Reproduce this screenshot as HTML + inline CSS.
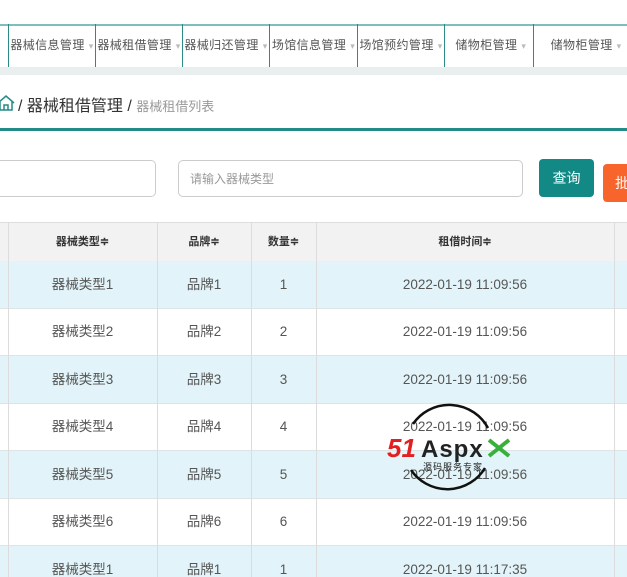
<!DOCTYPE html>
<html><head><meta charset="utf-8">
<style>
*{margin:0;padding:0;box-sizing:border-box}
html,body{width:627px;height:577px;overflow:hidden}
body{background:#fff;position:relative;font-family:"Liberation Sans","Noto Sans CJK SC",sans-serif}
.a{position:absolute}
.nav{top:24px;left:0;width:627px;height:43px;border-top:2px solid #7fbfbb;background:#fff}
.band{top:67px;left:0;width:627px;height:8px;background:#e8efee}
.sep{top:24px;width:1px;height:43px;background:#2e8a86}
.ni{top:24px;height:43px;line-height:43px;font-size:12px;color:#555;text-align:center;letter-spacing:0.4px;white-space:nowrap}
.ni i{font-style:normal;color:#bbb;font-size:9px;margin-left:4px}
.bc{top:93px;left:0;font-size:16px;color:#333;white-space:nowrap}
.bc span{font-size:13px;color:#999}
.line{top:128px;left:0;width:627px;height:3px;background:#238a85}
.inp{border:1px solid #ccc;border-radius:5px;background:#fff}
.row{left:0;width:627px;height:47.5px;border-bottom:1px solid #dde4e6}
.c{position:absolute;top:0;height:100%;display:flex;align-items:center;justify-content:center;font-size:13.5px;color:#555;line-height:1}
.v{top:222px;width:1px;height:355px;background:#dcdcdc}
</style></head><body>
<div class="a nav"></div>
<div class="a band"></div>
<div class="a sep" style="left:8px"></div>
<div class="a sep" style="left:95px"></div>
<div class="a sep" style="left:182px"></div>
<div class="a sep" style="left:269px"></div>
<div class="a sep" style="left:357px"></div>
<div class="a sep" style="left:444px"></div>
<div class="a sep" style="left:533px"></div>
<div class="a ni" style="left:9px;width:86px">器械信息管理<i>▾</i></div>
<div class="a ni" style="left:96px;width:86px">器械租借管理<i>▾</i></div>
<div class="a ni" style="left:183px;width:86px">器械归还管理<i>▾</i></div>
<div class="a ni" style="left:270px;width:87px">场馆信息管理<i>▾</i></div>
<div class="a ni" style="left:358px;width:86px">场馆预约管理<i>▾</i></div>
<div class="a ni" style="left:445px;width:88px">&nbsp;储物柜管理<i>▾</i></div>
<div class="a ni" style="left:534px;width:93px">&nbsp;&nbsp;&nbsp;储物柜管理<i>▾</i></div>
<svg class="a" style="left:0;top:95px" width="16" height="16" viewBox="0 0 16 16"><path d="M-2 8 L6 1 L14 8 M0 7 V15 H12 V7 M4 15 V10 H8 V15" fill="none" stroke="#238a85" stroke-width="1.5"/></svg>
<div class="a bc" style="left:18px;top:92px">/ 器械租借管理 / <span>器械租借列表</span></div>
<div class="a line"></div>
<div class="a inp" style="left:-10px;top:160px;width:166px;height:37px"></div>
<div class="a inp" style="left:178px;top:160px;width:345px;height:37px;font-size:12px;color:#999;line-height:36px;padding-left:11px">请输入器械类型</div>
<div class="a" style="left:539px;top:159px;width:55px;height:38px;background:#138985;border-radius:4px;color:#fff;font-size:14px;line-height:38px;text-align:center">查询</div>
<div class="a" style="left:603px;top:164px;width:40px;height:38px;background:#f7652c;border-radius:4px;color:#fff;font-size:14px;line-height:38px;padding-left:12px">批</div>
<div class="a" style="left:0;top:222px;width:627px;height:40px;background:#f2f2f2;border-top:1px solid #ddd;border-bottom:1px solid #ddd"></div>
<div class="a" style="left:0;top:222px;width:627px;height:40px;font-weight:bold">
<div class="c" style="left:8px;width:149px;font-size:11px;color:#333">器械类型≑</div>
<div class="c" style="left:157px;width:94px;font-size:11px;color:#333">品牌≑</div>
<div class="c" style="left:251px;width:65px;font-size:11px;color:#333">数量≑</div>
<div class="c" style="left:316px;width:298px;font-size:11px;color:#333">租借时间≑</div>
</div>
<div class="a row" style="top:261px;background:#e2f4f9"><div class="c" style="left:8px;width:149px">器械类型1</div><div class="c" style="left:157px;width:94px">品牌1</div><div class="c" style="left:251px;width:65px">1</div><div class="c" style="left:316px;width:298px">2022-01-19 11:09:56</div></div>
<div class="a row" style="top:308.5px"><div class="c" style="left:8px;width:149px">器械类型2</div><div class="c" style="left:157px;width:94px">品牌2</div><div class="c" style="left:251px;width:65px">2</div><div class="c" style="left:316px;width:298px">2022-01-19 11:09:56</div></div>
<div class="a row" style="top:356px;background:#e2f4f9"><div class="c" style="left:8px;width:149px">器械类型3</div><div class="c" style="left:157px;width:94px">品牌3</div><div class="c" style="left:251px;width:65px">3</div><div class="c" style="left:316px;width:298px">2022-01-19 11:09:56</div></div>
<div class="a row" style="top:403.5px"><div class="c" style="left:8px;width:149px">器械类型4</div><div class="c" style="left:157px;width:94px">品牌4</div><div class="c" style="left:251px;width:65px">4</div><div class="c" style="left:316px;width:298px">2022-01-19 11:09:56</div></div>
<div class="a row" style="top:451px;background:#e2f4f9"><div class="c" style="left:8px;width:149px">器械类型5</div><div class="c" style="left:157px;width:94px">品牌5</div><div class="c" style="left:251px;width:65px">5</div><div class="c" style="left:316px;width:298px">2022-01-19 11:09:56</div></div>
<div class="a row" style="top:498.5px"><div class="c" style="left:8px;width:149px">器械类型6</div><div class="c" style="left:157px;width:94px">品牌6</div><div class="c" style="left:251px;width:65px">6</div><div class="c" style="left:316px;width:298px">2022-01-19 11:09:56</div></div>
<div class="a row" style="top:546px;background:#e2f4f9"><div class="c" style="left:8px;width:149px">器械类型1</div><div class="c" style="left:157px;width:94px">品牌1</div><div class="c" style="left:251px;width:65px">1</div><div class="c" style="left:316px;width:298px">2022-01-19 11:17:35</div></div>
<div class="a v" style="left:8px"></div>
<div class="a v" style="left:157px"></div>
<div class="a v" style="left:251px"></div>
<div class="a v" style="left:316px"></div>
<div class="a v" style="left:614px"></div>
<svg class="a" style="left:385px;top:400px" width="130" height="95" viewBox="0 0 130 95">
<path d="M28 24 A44 44 0 0 1 103 28 M100 68 A44 44 0 0 1 26 70" fill="none" stroke="#111" stroke-width="2.5"/>
<text x="2" y="57" font-family="Liberation Sans" font-weight="bold" font-style="italic" font-size="26" fill="#e32020">51</text>
<text x="36" y="57" font-family="Liberation Sans" font-weight="bold" font-size="24" fill="#222" letter-spacing="1">Aspx</text>
<path d="M104 40 L124 56 M124 40 L104 56" stroke="#38b03a" stroke-width="4"/>
<text x="38" y="70" font-family="Noto Sans CJK SC" font-size="9" fill="#222" letter-spacing="1">源码服务专家</text>
</svg>
</body></html>
